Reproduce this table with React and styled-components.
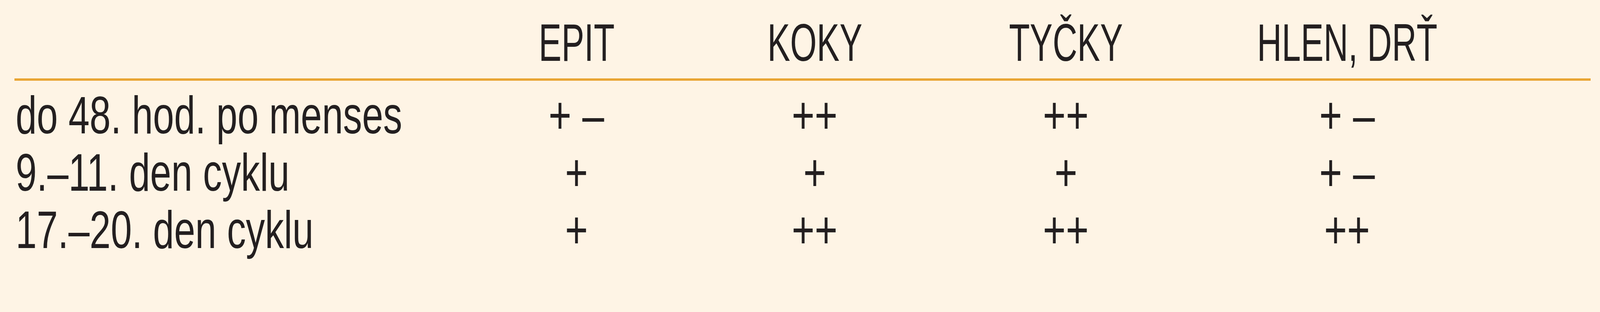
import React from "react";
import styled, { createGlobalStyle } from "styled-components";

// the reference is 4713 x 800: widths against the viewport width, heights against its height
const u = (px) => `${((px * 100) / 4713).toFixed(4)}vw`;
const v = (px) => `${((px * 100) / 800).toFixed(4)}vh`;

// findings per phase of the cycle
const widths = [1317, 676, 728, 752, 904];
const headers = ["EPIT", "KOKY", "TYČKY", "HLEN, DRŤ"];

const rows = [
  { label: "do 48. hod. po menses", values: ["+ –", "++", "++", "+ –"] },
  { label: "9.–11. den cyklu", values: ["+", "+", "+", "+ –"] },
  { label: "17.–20. den cyklu", values: ["+", "++", "++", "++"] },
];

const App = () => {
  // glyphs are sized by height, so squeeze them when the window is narrower than 4713:800
  const stretch =
    typeof window !== "undefined" && window.innerHeight
      ? window.innerWidth / 4713 / (window.innerHeight / 800)
      : 1;

  return (
    <>
      <GlobalStyle />
      <Page style={{ "--sx": stretch }}>
        <Table>
          <HeadRow>
            <Cell $width={widths[0]} />
            {headers.map((h, i) => (
              <Cell key={h} $width={widths[i + 1]} $center>
                <HeadText>{h}</HeadText>
              </Cell>
            ))}
          </HeadRow>
          <Body>
            {rows.map((row) => (
              <Row key={row.label}>
                <Cell $width={widths[0]}>
                  <LabelText>{row.label}</LabelText>
                </Cell>
                {row.values.map((val, i) => (
                  <Cell key={i} $width={widths[i + 1]} $center>
                    <ValueText>{val}</ValueText>
                  </Cell>
                ))}
              </Row>
            ))}
          </Body>
        </Table>
      </Page>
    </>
  );
};

const GlobalStyle = createGlobalStyle`
  html, body {
    margin: 0;
    padding: 0;
    background: #fef4e5;
  }
  body {
    overflow: hidden;
  }
`;

const Page = styled.div`
  width: 100vw;
  height: 100vh;
  background: #fef4e5;
  padding-left: ${u(43)};
  box-sizing: border-box;
  font-family: "Liberation Sans", Arial, sans-serif;
  font-size: ${v(136)};
  line-height: ${v(147)};
  color: #231f20;
`;

const Table = styled.div`
  width: ${u(4642)};
`;

const HeadRow = styled.div`
  display: flex;
  padding-top: ${v(36)};
  padding-bottom: ${v(18)};
  border-bottom: ${v(6)} solid #e9a534;
`;

const Body = styled.div`
  padding-top: ${v(15)};
`;

const Row = styled.div`
  display: flex;
`;

const Cell = styled.div`
  flex: 0 0 ${(p) => u(p.$width)};
  width: ${(p) => u(p.$width)};
  height: ${v(147)};
  white-space: nowrap;
  text-align: ${(p) => (p.$center ? "center" : "left")};
`;

const HeadText = styled.span`
  display: inline-block;
  transform: scaleX(calc(0.74 * var(--sx)));
  transform-origin: center;
`;

const LabelText = styled.span`
  display: inline-block;
  margin-left: ${u(3)};
  transform: scaleX(calc(0.823 * var(--sx)));
  transform-origin: left center;
`;

const ValueText = styled.span`
  display: inline-block;
  transform: scaleX(calc(0.85 * var(--sx)));
  transform-origin: center;
`;

export default App;
